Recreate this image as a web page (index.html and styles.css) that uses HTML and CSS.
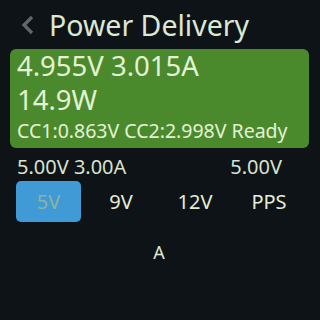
FILE: index.html
```html
<!DOCTYPE html>
<html>
<head>
<meta charset="utf-8">
<link rel="stylesheet" href="styles.css">
</head>
<body>
<div class="screen">
  <div class="header">
    <svg class="back" width="14" height="20" viewBox="0 0 14 20"><path d="M11 2 L3 10 L11 18" fill="none" stroke="#62686a" stroke-width="3.2"/></svg>
    <span class="title">Power Delivery</span>
  </div>
  <div class="meter">
    <div class="big">4.955V 3.015A</div>
    <div class="big">14.9W</div>
    <div class="small">CC1:0.863V CC2:2.998V Ready</div>
  </div>
  <div class="info">
    <span>5.00V 3.00A</span>
    <span>5.00V</span>
  </div>
  <div class="modes">
    <div class="mode active">5V</div>
    <div class="mode">9V</div>
    <div class="mode">12V</div>
    <div class="mode">PPS</div>
  </div>
  <div class="foot">A</div>
</div>
</body>
</html>
```
FILE: styles.css
```css
html, body { margin: 0; padding: 0; }
body { background: #0e1318; width: 320px; height: 320px; overflow: hidden; font-family: "Noto Sans", "Open Sans", sans-serif; color: #dfeecd; }
.screen { display: flex; flex-direction: column; }
.header { display: flex; align-items: center; height: 49px; padding-left: 21px; gap: 14px; }
.back { display: block; margin-top: 1px; }
.title { font-size: 28.5px; line-height: 32px; color: #dde8d2; margin-top: 1px; }
.meter { margin-left: 10px; width: 299px; height: 99px; box-sizing: border-box; background: #4a8a2d; border-radius: 6px; padding: 0 0 0 7px; }
.big { font-size: 27.5px; line-height: 34px; color: #e4f2d4; }
.small { font-size: 19.5px; line-height: 24px; margin-top: 2px; color: #e4f2d4; }
.info { display: flex; justify-content: space-between; padding: 7px 38px 0 17px; font-size: 20px; line-height: 24px; color: #d8e2cc; }
.modes { display: flex; align-items: center; padding-left: 16px; margin-top: 2px; }
.mode { width: 74px; height: 41px; display: flex; align-items: center; justify-content: center; font-size: 20px; color: #e4edd6; }
.mode.active { width: 65px; background: #409ad6; border-radius: 5px; color: #8cb3a0; margin-right: 3px; }
.foot { text-align: center; font-size: 18px; line-height: 24px; margin-top: 18px; color: #dfe8cf; padding-right: 2px; }
```
